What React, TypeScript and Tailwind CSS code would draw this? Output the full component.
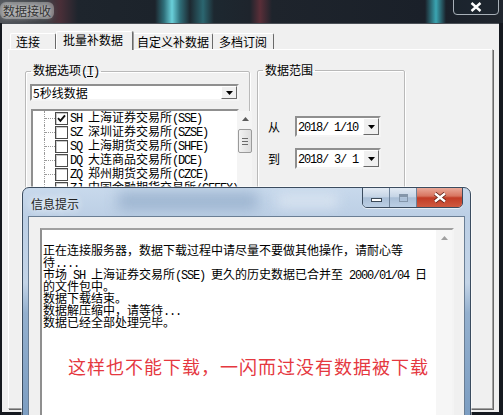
import React from 'react';

const cjk = "font-['Noto_Sans_CJK_SC','Liberation_Sans',sans-serif]";
const mono = "font-['Liberation_Mono','DejaVu_Sans_Mono',monospace] text-[12px] tracking-[-1.2px] whitespace-pre";

// ASCII runs are drawn in a narrow mono face, like SimSun's half-width glyphs
function Mixed({ text }: { text: string }) {
  const parts = text.split(/([\x20-\x7e]+)/).filter(Boolean);
  return (
    <>
      {parts.map((p, i) =>
        /^[\x20-\x7e]+$/.test(p) ? (
          <span key={i} className={mono}>{p}</span>
        ) : (
          <span key={i}>{p}</span>
        )
      )}
    </>
  );
}

function DownButton({ h }: { h: string }) {
  return (
    <span className={`w-[16px] ${h} flex items-center justify-center bg-[#f0f0f0] border border-t-white border-l-white border-r-[#696969] border-b-[#696969]`}>
      <svg width="7" height="4" viewBox="0 0 7 4"><path d="M0 0H7L3.5 4Z" fill="#000" /></svg>
    </span>
  );
}

function Check({ on }: { on?: boolean }) {
  return (
    <span className="w-[13px] h-[13px] shrink-0 border border-[#4a4a4a] bg-white shadow-[inset_1px_1px_0_#c8c8c8] flex items-center justify-center">
      {on && (
        <svg width="9" height="9" viewBox="0 0 9 9">
          <path d="M1 4.2L3.4 6.8L8 1.4" stroke="#111" strokeWidth="1.9" fill="none" />
        </svg>
      )}
    </span>
  );
}

const markets = [
  { text: 'SH 上海证券交易所(SSE)', on: true },
  { text: 'SZ 深圳证券交易所(SZSE)' },
  { text: 'SQ 上海期货交易所(SHFE)' },
  { text: 'DQ 大连商品交易所(DCE)' },
  { text: 'ZQ 郑州期货交易所(CZCE)' },
  { text: 'ZJ 中国金融期货交易所(CFFEX)' },
];

const logLines = [
  '',
  '正在连接服务器，数据下载过程中请尽量不要做其他操作，请耐心等',
  '待....',
  '市场 SH 上海证券交易所(SSE) 更久的历史数据已合并至 2000/01/04 日',
  '的文件包中。',
  '数据下载结束。',
  '数据解压缩中，请等待...',
  '数据已经全部处理完毕。',
];

function DateBox({ value }: { value: string }) {
  return (
    <div className="w-[86px] h-[21px] flex items-center bg-white border-2 border-t-[#8f8f8f] border-l-[#8f8f8f] border-r-[#f4f4f4] border-b-[#f4f4f4]">
      <span className="flex-1 pl-[1px] leading-[14px] text-black">
        <Mixed text={value} />
      </span>
      <DownButton h="h-[17px]" />
    </div>
  );
}

export default function App() {
  return (
    <div className={`relative w-[503px] h-[415px] overflow-hidden bg-[#15191f] text-[12px] text-black ${cjk}`}>
      {/* window caption (glass) */}
      <div className="relative h-[23px] bg-[linear-gradient(90deg,#50545a_0px,#3a3d42_45px,#4a2f38_60px,#1e252d_78px,#1c232b_155px,#2f6f7a_164px,#6ad0da_172px,#2f6f7a_180px,#1d2830_190px,#2b6670_203px,#1d2830_214px,#1e242c_250px,#5a2e38_260px,#1e242c_272px,#1a2029_425px,#3aa5b2_436px,#1a2029_446px,#20262e_503px)]">
        <span className="absolute left-[0px] top-[2px] px-[3px] leading-[17px] text-[12px] text-[#333] bg-[#b8b8b8]/50 rounded-[6px] [text-shadow:0_0_4px_#e0e0e0,0_0_8px_#d8d8d8]">
          数据接收
        </span>
        <div className="absolute right-[4px] top-[-2px] w-[46px] h-[17px] rounded-b-[4px] border border-[#a8b0b8] bg-[#1d2630]/60 flex items-center justify-center">
          <svg width="12" height="10" viewBox="0 0 12 10">
            <path d="M1.5 1L10.5 9M10.5 1L1.5 9" stroke="#fff" strokeWidth="2.4" />
          </svg>
        </div>
      </div>

      {/* window client */}
      <div className="ml-[2px] mr-[4px] h-[389px] bg-[#f0f0f0] border-t border-[#4b5057] pt-[7px]">
        <div className="flex items-end h-[18px] pl-[8px]">
          <div className="w-[46px] h-[16px] pl-[5px] pt-[1px] leading-[14px] border-t border-l border-r border-t-white border-l-white border-r-[#696969] rounded-t-[2px]">连接</div>
          <div className="relative z-10 translate-y-[1px] w-[77px] h-[19px] pl-[6px] pt-[1px] leading-[14px] bg-[#f0f0f0] border-t border-l border-r border-t-white border-l-white border-r-[#696969] rounded-t-[2px] shadow-[1px_0_0_#a0a0a0]">批量补数据</div>
          <div className="w-[80px] h-[16px] pl-[4px] pt-[1px] leading-[14px] border-t border-r border-t-white border-r-[#696969] rounded-t-[2px]">自定义补数据</div>
          <div className="w-[61px] h-[16px] pl-[6px] pt-[1px] leading-[14px] border-t border-r border-t-white border-r-[#696969] rounded-t-[2px]">多档订阅</div>
        </div>

        <div className="ml-[6px] mr-[6px] h-[360px] border border-t-white border-l-white border-r-[#a0a0a0] border-b-[#a0a0a0] shadow-[1px_1px_0_#696969]">
          <div className="flex gap-[7px] pl-[16px] pt-[13px]">
            {/* 数据选项 */}
            <fieldset className="w-[225px] h-[330px] px-[4px] border border-[#b9b9b9] rounded-[2px] shadow-[inset_1px_1px_0_#fff,1px_1px_0_#fff]">
              <legend className="ml-[1px] px-[2px] leading-[14px]">
                数据选项<Mixed text="(" /><span className={`${mono} underline`}>T</span><Mixed text=")" />
              </legend>
              <div className="mt-[5px] w-[209px] h-[17px] flex items-center bg-white border-2 border-t-[#8f8f8f] border-l-[#8f8f8f] border-r-[#f4f4f4] border-b-[#f4f4f4]">
                <span className="flex-1 pl-[1px] leading-[13px]">5秒线数据</span>
                <DownButton h="h-[13px]" />
              </div>

              <div className="mt-[8px] ml-[1px] w-[208px] h-[110px] flex bg-white border-2 border-t-[#8f8f8f] border-l-[#8f8f8f] border-r-[#f4f4f4] border-b-[#f4f4f4]">
                <div className="flex-1">
                  {markets.map((m) => (
                    <div key={m.text} className="flex items-center h-[14px] pl-[11px] whitespace-nowrap">
                      <span className="w-[11px] h-full border-l border-dotted border-[#9a9a9a] flex items-center">
                        <span className="w-full border-t border-dotted border-[#9a9a9a]" />
                      </span>
                      <Check on={m.on} />
                      <span className="ml-[2px] leading-[14px]">
                        <Mixed text={m.text} />
                      </span>
                    </div>
                  ))}
                </div>
                <div className="w-[16px] bg-[#f4f4f4] flex flex-col items-center">
                  <div className="h-[16px] flex items-center justify-center">
                    <svg width="7" height="4" viewBox="0 0 7 4"><path d="M0 4H7L3.5 0Z" fill="#5a5a5a" /></svg>
                  </div>
                  <div className="mt-[2px] w-[14px] h-[24px] rounded-[2px] border border-[#9a9a9a] bg-[linear-gradient(90deg,#f2f2f2,#dcdcdc)] flex flex-col items-center justify-center gap-[2px]">
                    <span className="w-[6px] border-t border-[#6a6a6a]" />
                    <span className="w-[6px] border-t border-[#6a6a6a]" />
                    <span className="w-[6px] border-t border-[#6a6a6a]" />
                  </div>
                </div>
              </div>
            </fieldset>

            {/* 数据范围 */}
            <fieldset className="w-[148px] h-[330px] px-[4px] border border-[#b9b9b9] rounded-[2px] shadow-[inset_1px_1px_0_#fff,1px_1px_0_#fff]">
              <legend className="ml-[1px] px-[2px] leading-[14px]">数据范围</legend>
              <div className="mt-[39px] ml-[6px] flex items-center gap-[15px]">
                <span className="leading-[14px]">从</span>
                <DateBox value="2018/ 1/10" />
              </div>
              <div className="mt-[11px] ml-[6px] flex items-center gap-[15px]">
                <span className="leading-[14px]">到</span>
                <DateBox value="2018/ 3/ 1" />
              </div>
            </fieldset>
          </div>
        </div>
      </div>

      {/* 信息提示 dialog, lying over the window */}
      <div className="absolute left-[22px] top-[187px] w-[449px] h-[240px] rounded-t-[7px] border border-[#3b4c5f] bg-[linear-gradient(180deg,#c8d9ec_0px,#bccfe5_28px,#c3d4e7_95px,#94b0ce_125px,#7a9cc1_100%)] shadow-[0_0_0_1px_rgba(255,255,255,0.5)]">
        <div className="relative h-[28px] overflow-hidden rounded-t-[6px]">
          <div className="absolute left-[95px] top-[4px] w-[140px] h-[18px] bg-[#8ea8c6] blur-[7px] opacity-70" />
          <div className="absolute left-[255px] top-[6px] w-[60px] h-[14px] bg-[#dfe8f2] blur-[6px] opacity-70" />
          <span className="absolute left-[8px] top-[8px] leading-[16px] text-[12px] text-[#1f1f1f] [text-shadow:0_0_6px_#eef3f8,0_0_9px_#eef3f8]">
            信息提示
          </span>
        </div>

        <div className="absolute left-[339px] top-[-1px] flex h-[21px] rounded-b-[5px] overflow-hidden border border-[#3b4c5f] shadow-[0_1px_0_rgba(255,255,255,0.6)]">
          <div className="w-[27px] flex items-center justify-center border-r border-[#6d8198] bg-[linear-gradient(180deg,#e2eaf3,#c6d5e6_45%,#a9bed6_52%,#bccfe4)]">
            <span className="mt-[4px] w-[11px] h-[4px] bg-white border border-[#3c4a58]" />
          </div>
          <div className="w-[27px] flex items-center justify-center border-r border-[#6d8198] bg-[linear-gradient(180deg,#e2eaf3,#c6d5e6_45%,#a9bed6_52%,#bccfe4)]">
            <span className="w-[9px] h-[8px] border border-[#8496aa] shadow-[inset_0_2px_0_#8496aa]" />
          </div>
          <div className="w-[45px] flex items-center justify-center bg-[linear-gradient(180deg,#eaa999,#d87560_42%,#c23c26_52%,#cf5a40)]">
            <svg width="14" height="11" viewBox="0 0 14 11">
              <path d="M2 1.5L12 9.5M12 1.5L2 9.5" stroke="#5a1a10" strokeWidth="4" />
              <path d="M2 1.5L12 9.5M12 1.5L2 9.5" stroke="#fff" strokeWidth="2.4" />
            </svg>
          </div>
        </div>

        <div className="ml-[5px] w-[437px] h-[210px] border border-[#6a7e94] bg-[#f0f0f0] pt-[11px] pl-[11px]">
          <div className="w-[414px] h-[200px] flex bg-white border-2 border-t-[#a0a0a0] border-l-[#8f8f8f] border-r-[#f4f4f4] border-b-[#f4f4f4]">
            <div className="flex-1 pl-[1px] pt-[2px] whitespace-nowrap">
              {logLines.map((l, i) => (
                <div key={i} className="h-[12px] leading-[12px]">
                  <Mixed text={l} />
                </div>
              ))}
              <div className="mt-[26px] pl-[25px] h-[24px] leading-[24px] text-[18px] tracking-[1px] text-[#e5383f]">
                这样也不能下载，一闪而过没有数据被下载
              </div>
            </div>
            <div className="w-[16px] bg-[#f6f6f6] flex flex-col items-center">
              <div className="h-[16px] flex items-center justify-center">
                <svg width="7" height="4" viewBox="0 0 7 4"><path d="M0 4H7L3.5 0Z" fill="#a0a0a0" /></svg>
              </div>
            </div>
          </div>
        </div>
      </div>
    </div>
  );
}
